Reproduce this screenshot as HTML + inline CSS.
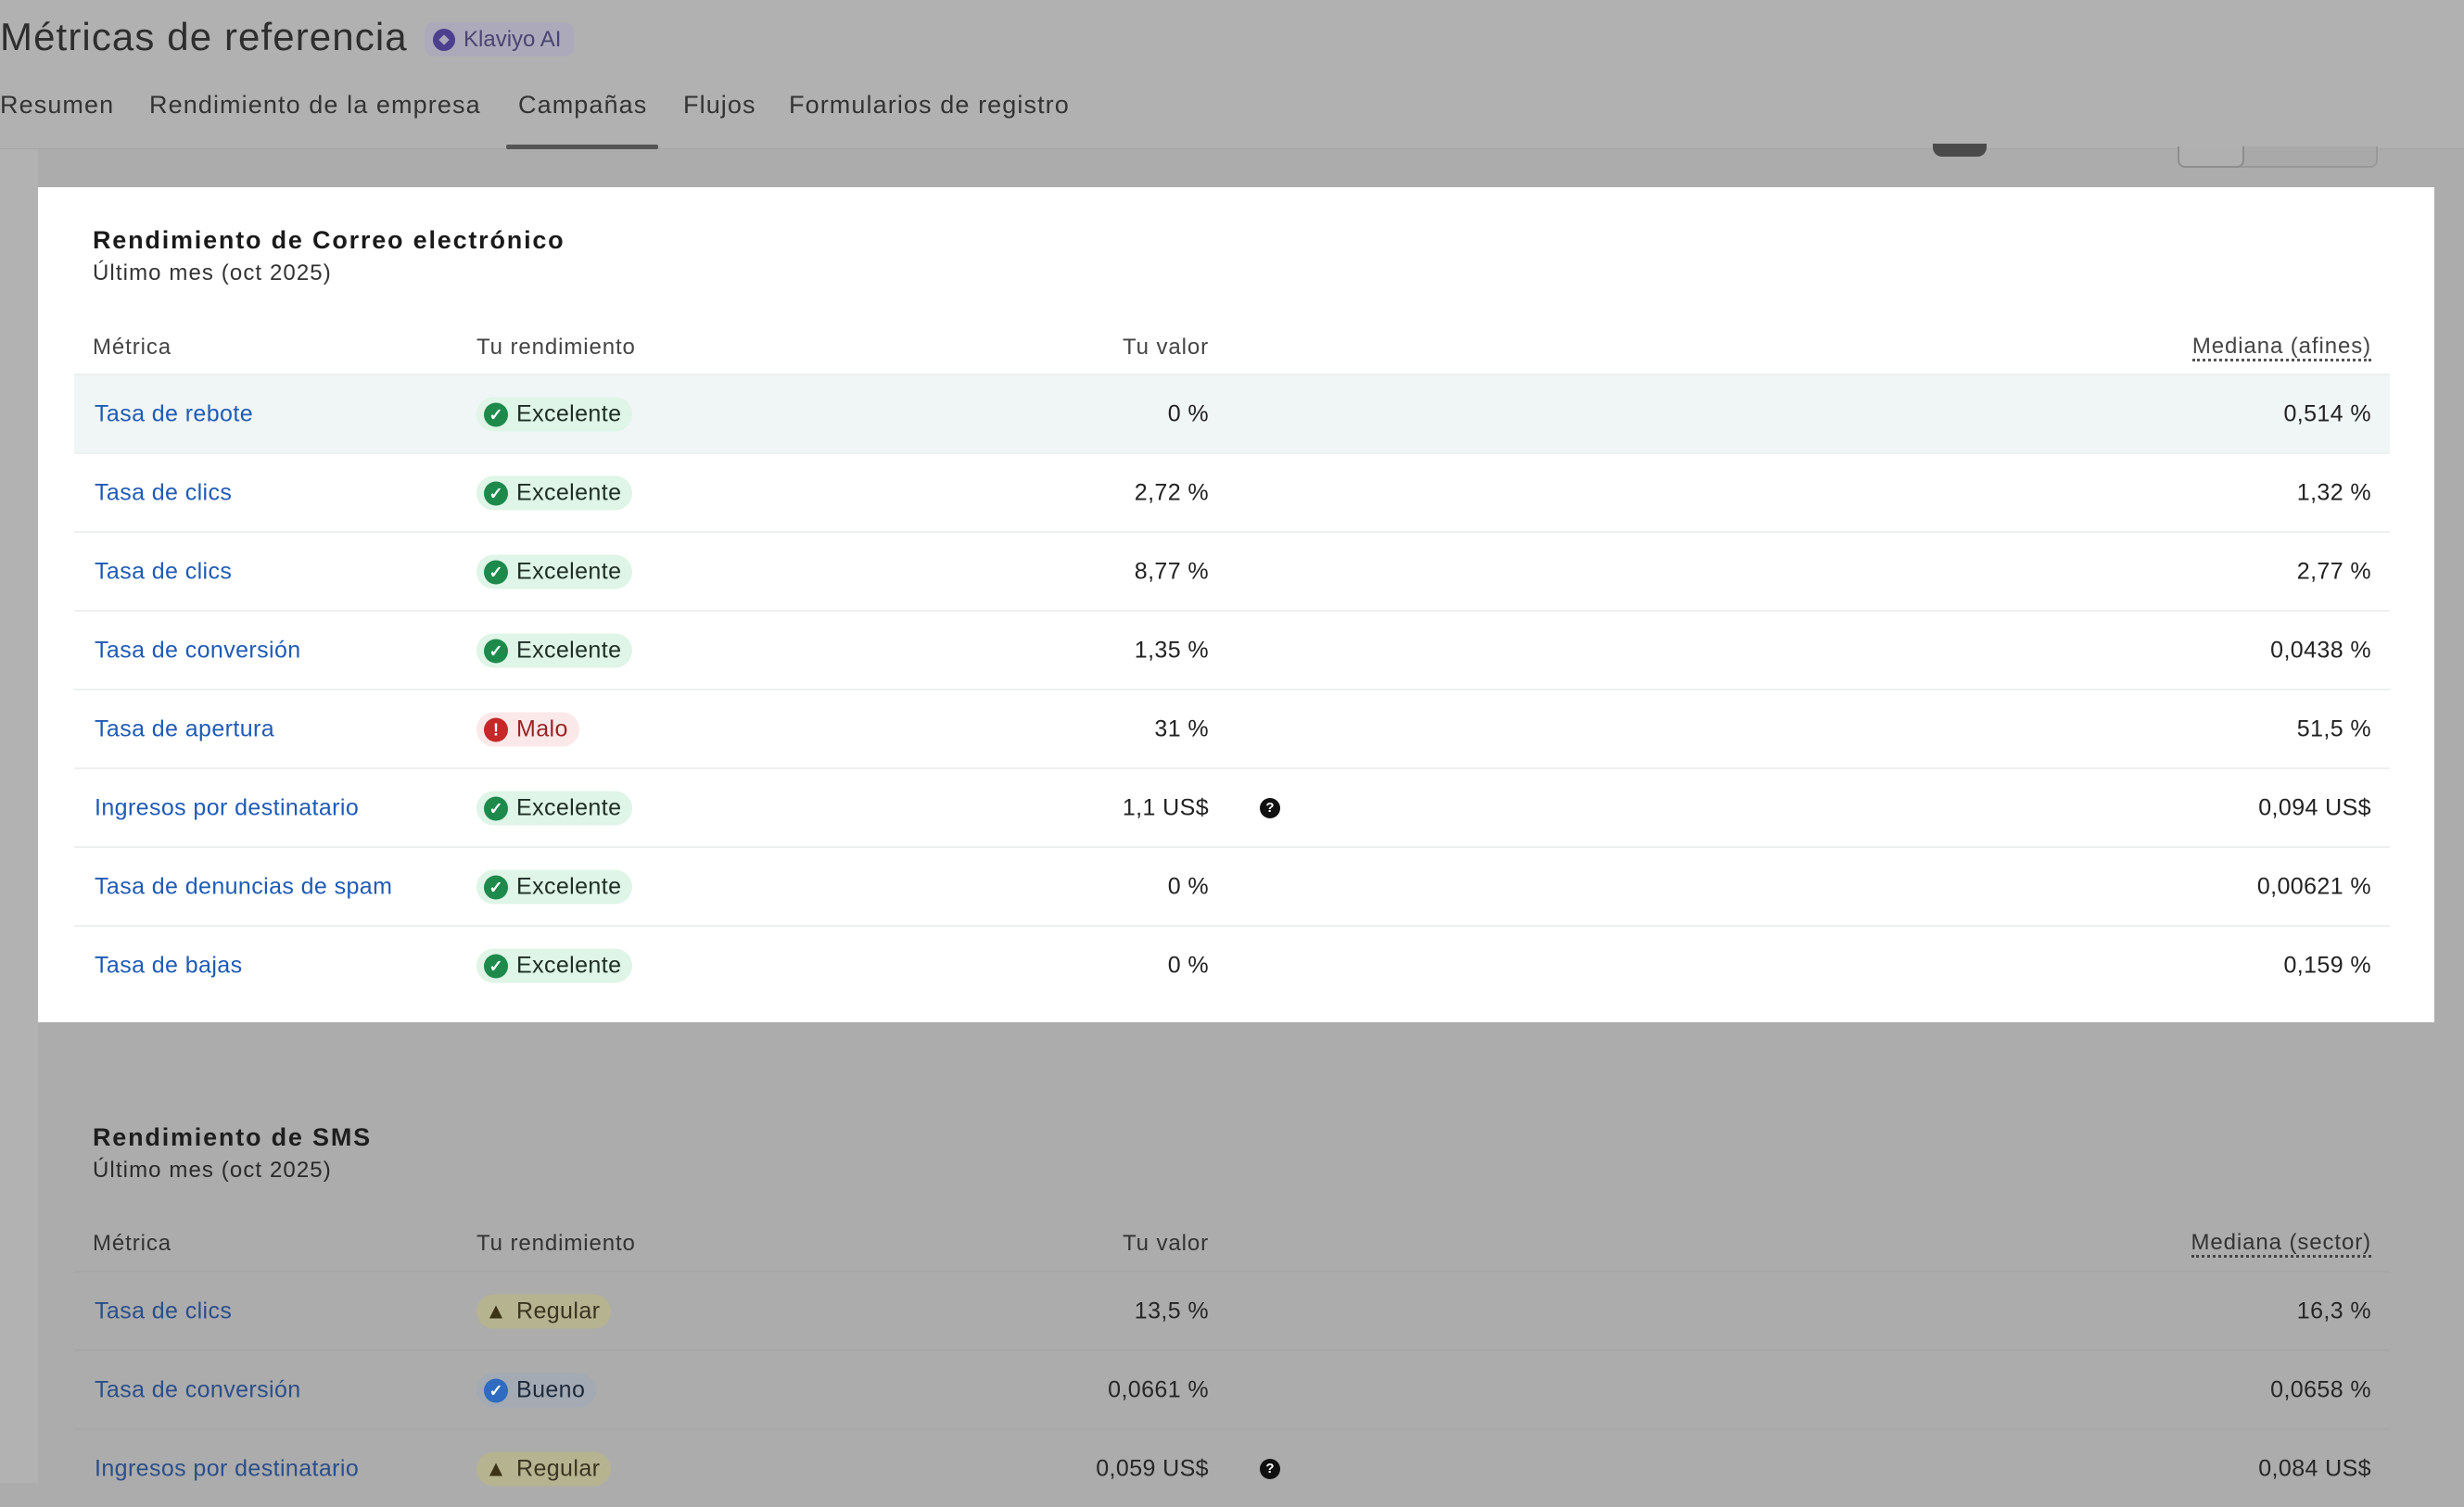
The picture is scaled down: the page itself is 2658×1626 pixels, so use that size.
<!DOCTYPE html>
<html><head><meta charset="utf-8"><style>
*{margin:0;padding:0;box-sizing:border-box}
body{width:2658px;height:1600px;overflow:hidden;background:#acacac;font-family:"Liberation Sans",sans-serif;position:relative}
.hdr{position:absolute;left:0;top:0;width:2658px;height:161px;background:#b1b1b1;border-bottom:1px solid #a6a6a6}
.t{position:absolute;left:0;top:16px;font-size:42px;letter-spacing:1.1px;color:#2e2e2e}
.ai{position:absolute;left:458px;top:24px;width:161px;height:37px;border-radius:10px;background:#aca9bb;color:#4a4570;font-size:24px;line-height:37px;padding-left:42px}
.ai i{position:absolute;left:9px;top:7px;width:24px;height:24px;border-radius:50%;background:#4b3f8e}
.ai i:after{content:"";position:absolute;left:8px;top:8px;width:8px;height:8px;background:#aca9bb;transform:rotate(45deg)}
.tab{position:absolute;top:98px;font-size:27px;letter-spacing:1.1px;color:#333}
.ul{position:absolute;left:546px;top:156px;width:164px;height:5px;background:#555;border-radius:2px}
.strip{position:absolute;left:0;top:161px;width:41px;height:1439px;background:#b2b2b2}
.card{position:absolute;left:41px;top:202px;width:2585px;height:901px;background:#fff}
.sec{position:absolute;left:0;width:2658px}
.h{position:absolute;left:100px;font-size:27px;letter-spacing:1.8px;font-weight:bold;color:#1a1a1a}
.s{position:absolute;left:100px;font-size:24px;letter-spacing:1.1px;color:#333}
.th{position:absolute;font-size:24px;letter-spacing:.9px;color:#444}
.row{position:absolute;left:80px;width:2498px;height:85px;border-top:2px solid #eef0f0}
.row>*{position:absolute;top:50%;transform:translateY(-50%);font-size:25px;letter-spacing:.4px}
.lk{left:22px;color:#1f5bb5}
.b{left:434px;height:37px;border-radius:19px;padding:0 12px 0 43px;line-height:37px;color:#1e2e24}
.b i{position:absolute;left:8px;top:6px;width:26px;height:26px;border-radius:50%;color:#fff;font-style:normal;font-size:18px;line-height:26px;text-align:center;font-weight:bold;letter-spacing:0}
.g{background:#dff5e7}.g i{background:#1d8a4c}
.r{background:#fbe8e8;color:#9a2424}.r i{background:#c62828}
.v{right:1274px;color:#222;text-align:right}
.m{right:20px;color:#222}
.q{left:1279px;width:22px;height:22px;border-radius:50%;background:#111;color:#fff;font-size:15px!important;line-height:22px;text-align:center;font-weight:bold;letter-spacing:0!important}
.dim .lk{color:#2a4e8a}.dim .v,.dim .m{color:#262626}
.dim .row{border-top:2px solid #a7a7a7}
.y{background:#b6b391;color:#3a3420}.y i{background:none;color:#3c3214;font-size:24px}
.bl{background:#a3aab4;color:#1d2a3a}.bl i{background:#2f6bc0}
</style></head><body>
<div class="hdr">
<div class="t">Métricas de referencia</div>
<div class="ai"><i></i>Klaviyo AI</div>
<div class="tab" style="left:0">Resumen</div>
<div class="tab" style="left:161px">Rendimiento de la empresa</div>
<div class="tab" style="left:559px">Campañas</div>
<div class="tab" style="left:737px">Flujos</div>
<div class="tab" style="left:851px">Formularios de registro</div>
<div class="ul"></div>
</div>
<div class="strip"></div>
<div style="position:absolute;left:2085px;top:155px;width:58px;height:14px;border-radius:0 0 10px 10px;background:#4a4a4a"></div>
<div style="position:absolute;left:2349px;top:158px;width:216px;height:23px;border:2px solid #999;border-top:none;border-radius:0 0 8px 8px;background:#a9a9a9"></div>
<div style="position:absolute;left:2349px;top:158px;width:72px;height:23px;border:2px solid #8d8d8d;border-top:none;border-radius:0 0 8px 8px;background:#b0b0b0"></div>
<div class="card"></div>

<div class="sec" style="top:0">
<div class="h" style="top:244px">Rendimiento de Correo electrónico</div>
<div class="s" style="top:281px">Último mes (oct 2025)</div>
<div class="th" style="left:100px;top:361px">Métrica</div>
<div class="th" style="left:514px;top:361px">Tu rendimiento</div>
<div class="th" style="right:1354px;top:361px">Tu valor</div>
<div class="th" style="right:100px;top:361px;border-bottom:3px dotted #555;line-height:26px">Mediana (afines)</div>
<div class="row" style="top:403px;background:#f0f5f5"><span class="lk">Tasa de rebote</span><span class="b g"><i>✓</i>Excelente</span><span class="v">0 %</span><span class="m">0,514 %</span></div>
<div class="row" style="top:488px"><span class="lk">Tasa de clics</span><span class="b g"><i>✓</i>Excelente</span><span class="v">2,72 %</span><span class="m">1,32 %</span></div>
<div class="row" style="top:573px"><span class="lk">Tasa de clics</span><span class="b g"><i>✓</i>Excelente</span><span class="v">8,77 %</span><span class="m">2,77 %</span></div>
<div class="row" style="top:658px"><span class="lk">Tasa de conversión</span><span class="b g"><i>✓</i>Excelente</span><span class="v">1,35 %</span><span class="m">0,0438 %</span></div>
<div class="row" style="top:743px"><span class="lk">Tasa de apertura</span><span class="b r"><i>!</i>Malo</span><span class="v">31 %</span><span class="m">51,5 %</span></div>
<div class="row" style="top:828px"><span class="lk">Ingresos por destinatario</span><span class="b g"><i>✓</i>Excelente</span><span class="v">1,1 US$</span><span class="q">?</span><span class="m">0,094 US$</span></div>
<div class="row" style="top:913px"><span class="lk">Tasa de denuncias de spam</span><span class="b g"><i>✓</i>Excelente</span><span class="v">0 %</span><span class="m">0,00621 %</span></div>
<div class="row" style="top:998px"><span class="lk">Tasa de bajas</span><span class="b g"><i>✓</i>Excelente</span><span class="v">0 %</span><span class="m">0,159 %</span></div>
</div>

<div class="sec dim" style="top:0">
<div class="h" style="top:1212px;color:#1e1e1e">Rendimiento de SMS</div>
<div class="s" style="top:1249px;color:#2a2a2a">Último mes (oct 2025)</div>
<div class="th" style="left:100px;top:1328px;color:#333">Métrica</div>
<div class="th" style="left:514px;top:1328px;color:#333">Tu rendimiento</div>
<div class="th" style="right:1354px;top:1328px;color:#333">Tu valor</div>
<div class="th" style="right:100px;top:1328px;color:#333;border-bottom:3px dotted #444;line-height:26px">Mediana (sector)</div>
<div class="row" style="top:1371px"><span class="lk">Tasa de clics</span><span class="b y"><i>▲</i>Regular</span><span class="v">13,5 %</span><span class="m">16,3 %</span></div>
<div class="row" style="top:1456px"><span class="lk">Tasa de conversión</span><span class="b bl"><i>✓</i>Bueno</span><span class="v">0,0661 %</span><span class="m">0,0658 %</span></div>
<div class="row" style="top:1541px"><span class="lk">Ingresos por destinatario</span><span class="b y"><i>▲</i>Regular</span><span class="v">0,059 US$</span><span class="q">?</span><span class="m">0,084 US$</span></div>
</div>
</body></html>
